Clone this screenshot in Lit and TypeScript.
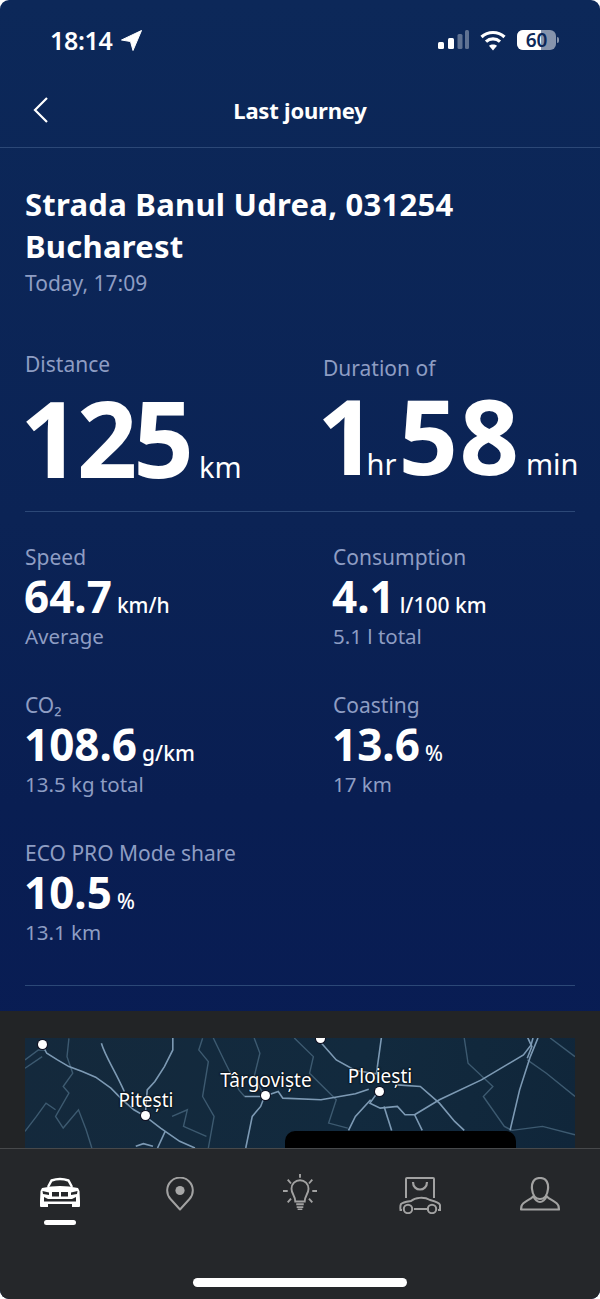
import { LitElement, html, css, svg } from "lit";
import { customElement } from "lit/decorators.js";

const W: [number, number][] = [];
for (let r = 0; r < 9; r++) for (let c = 0; c < 4; c++) W.push([176 + c * 166 - 60, 20 + r * 158.7 + 47]);

interface Stat { label: string; value: string; unit: string; sub: string; }
const stats: Stat[] = [
  { label: "Speed", value: "64.7", unit: "km/h", sub: "Average" },
  { label: "Consumption", value: "4.1", unit: "l/100 km", sub: "5.1 l total" },
  { label: "CO₂", value: "108.6", unit: "g/km", sub: "13.5 kg total" },
  { label: "Coasting", value: "13.6", unit: "%", sub: "17 km" },
  { label: "ECO PRO Mode share", value: "10.5", unit: "%", sub: "13.1 km" },
];

const bright = [
  "M110 135 L122 160 L150 180 L180 200 L215 215 L250 232 L290 265 L320 300 L350 330 L380 350 L420 385 L470 425 L510 445",
  "M265 130 C275 170 300 210 325 275",
  "M452 114 L452 150 L430 200 L405 245 L385 270 L380 345",
  "M432 395 L412 445",
  "M640 290 L690 290 L728 275 L740 295 L840 300 L930 282 L965 268",
  "M692 290 L682 320 L660 350 L643 445",
  "M990 275 L968 310 L995 325 L1040 320 L1060 345 L1085 345 L1105 392",
  "M1085 345 L1150 300 L1260 240 L1370 165 L1390 135 L1395 114",
  "M838 125 L880 180 L930 212 L985 222 L998 114",
  "M1335 392 L1360 270 L1388 170 L1408 114",
  "M1040 255 L1100 260 L1150 310 L1190 365 L1215 392",
  "M970 300 L930 350 L912 392",
  "M1005 320 L1025 392",
  "M1380 110 L1392 140 L1380 175",
  "M355 440 L375 432 L400 440",
];
const dim = [
  "M65 180 L100 150 L120 150",
  "M65 205 L110 170",
  "M180 115 L175 170 L190 220 L165 260 L180 280 L145 350 L165 385 L205 330 L225 390 L240 445",
  "M65 395 L95 350 L120 310 L145 330",
  "M530 115 L520 150 L545 185 L530 290 L560 350 L545 445",
  "M558 114 L590 190 L625 270 L640 290",
  "M665 114 L680 160 L665 230 L690 285",
  "M770 114 L820 170 L810 220 L880 300 L860 370 L910 385",
  "M1215 114 L1225 190 L1290 260 L1265 290 L1320 380 L1340 392 L1420 380 L1505 405",
  "M1380 180 L1430 220 L1505 290",
  "M1440 114 L1505 170",
  "M450 350 L490 330 L480 380 L540 410",
];

@customElement("app-root")
export class AppRoot extends LitElement {
  static styles = css`
    :host { display: block; width: 600px; height: 1299px; background: #fff; font-family: "Noto Sans", "Open Sans", sans-serif; }
    .screen { position: relative; width: 600px; height: 1299px; overflow: hidden; border-radius: 9px; display: flex; flex-direction: column;
      background: linear-gradient(180deg, #0c2859 0%, #0b2355 40%, #091e52 62%, #081b56 100%); color: #fff; }
    .status { height: 79px; flex: none; display: flex; justify-content: space-between; align-items: flex-start; padding: 26px 41px 0 50px; box-sizing: border-box; }
    .time { display: flex; align-items: center; gap: 8px; font-size: 25px; line-height: 28px; font-weight: 600; letter-spacing: -0.3px; }
    .sys { display: flex; align-items: center; gap: 11px; height: 28px; }
    .bat { position: relative; width: 39px; height: 20px; border-radius: 6px; overflow: hidden; background: rgba(255,255,255,.5); color: #0c2859; font-size: 19px; line-height: 20px; font-weight: 600; text-align: center; }
    .bat i { position: absolute; left: 0; top: 0; bottom: 0; width: 24px; background: #fff; }
    .bat span { position: relative; }
    .batwrap { display: flex; align-items: center; gap: 1px; }
    .nub { width: 2px; height: 6px; border-radius: 0 2px 2px 0; background: rgba(255,255,255,.5); }
    .nav { height: 69px; flex: none; box-sizing: border-box; border-bottom: 1px solid #2c4877; position: relative; display: flex; align-items: center; justify-content: center; padding-bottom: 6px; font-size: 22px; font-weight: 700; letter-spacing: -0.2px; }
    .back { position: absolute; left: 32px; top: 16px; }
    .head { padding: 35px 25px 0; flex: none; }
    h1 { margin: 0; font-size: 31px; line-height: 42px; font-weight: 700; letter-spacing: 0.25px; }
    .date { font-size: 21px; line-height: 32px; color: #8e9dc3; }
    .big { display: flex; flex: none; padding: 49px 25px 0; height: 163px; }
    .bigcol { width: 298px; flex: none; }
    .bigcol + .bigcol { width: 252px; }
    .lab { font-size: 21px; line-height: 32px; color: #8e9dc3; }
    .dur { padding-top: 4px; }
    .bignum { display: flex; align-items: baseline; font-size: 106px; line-height: 114px; font-weight: 700; margin-left: -5px; letter-spacing: -4px; }
    .dur .bignum { font-size: 104px; line-height: 101px; letter-spacing: 1.5px; margin-left: -6px; }
    .bigunit { font-size: 29px; line-height: 1; font-weight: 400; letter-spacing: 0; margin: 0 4px 0 9px; }
    .dur .bigunit { margin: 0 2px 0 -11.5px; }
    .dur .bigunit.min { margin: 0 0 0 5.5px; }
    .div { height: 1px; margin: 0 25px; background: #2c4877; flex: none; }
    .grid { display: grid; flex: none; grid-template-columns: 308px 1fr; grid-auto-rows: 148px; padding: 29px 25px 0; box-sizing: border-box; height: 473px; }
    .val { display: flex; align-items: baseline; gap: 5px; font-size: 44px; line-height: 46px; font-weight: 700; margin-left: -1px; }
    .unit { font-size: 21px; line-height: 1; font-weight: 500; }
    .sub { font-size: 20.5px; line-height: 30px; margin-top: 2px; color: #8e9dc3; }
    .mapzone { margin-top: 25px; height: 137px; flex: none; background: #222426; padding: 27px 25px 0; box-sizing: border-box; }
    .map { position: relative; height: 110px; overflow: hidden; background: linear-gradient(100deg, #14293c, #122a3e 60%, #10263a); }
    .map svg { display: block; width: 100%; height: 100%; }
    .city { position: absolute; color: #fff; font-size: 19px; line-height: 24px; transform: translateX(-50%); white-space: nowrap; text-shadow: 0 0 2px #000, 0 0 2px #000; }
    .dot { position: absolute; width: 9px; height: 9px; margin: -4.5px; border-radius: 50%; background: #fff; box-shadow: 0 0 0 1px #112; }
    .pill { position: absolute; left: 260px; top: 93px; width: 231px; height: 40px; border-radius: 10px; background: #000; }
    .tabs { height: 151px; background: #25272a; border-top: 1px solid #47494b; box-sizing: border-box; flex: none; position: relative; }
    .row { display: grid; grid-template-columns: repeat(5, 120px); height: 71px; padding-top: 28px; }
    .tab { display: flex; flex-direction: column; align-items: center; }
    .ind { width: 32px; height: 5px; border-radius: 3px; background: #fff; margin-top: 12px; }
    .bulb { margin-top: -3px; }
    .home { position: absolute; left: 193px; top: 129px; width: 214px; height: 9px; border-radius: 5px; background: #fff; }
    .wm { position: absolute; inset: 0; pointer-events: none; }
    .wm span { position: absolute; font-size: 30px; line-height: 36px; font-weight: 700; color: rgba(255,255,255,.018); transform: translate(-50%, -50%) rotate(-38deg); white-space: nowrap; }
  `;

  render() {
    return html`<div class="screen">
      <div class="status">
        <div class="time">18:14
          <svg width="21" height="21" viewBox="0 0 21 21"><path d="M20.5 .5 L0.5 10 L9.5 11.5 L12 20.5 Z" fill="#fff" stroke="#fff" stroke-linejoin="round"/></svg>
        </div>
        <div class="sys">
          <svg width="31" height="20" viewBox="0 0 31 20">
            <rect x="0" y="12" width="6" height="7" rx="1.5" fill="#fff"/>
            <rect x="10" y="8" width="6" height="11" rx="1.5" fill="#fff"/>
            <rect x="19.5" y="4" width="5" height="15" rx="1.5" fill="#fff" fill-opacity=".35"/>
            <rect x="27" y="0" width="4" height="19" rx="1.5" fill="#fff" fill-opacity=".35"/>
          </svg>
          <svg width="26" height="21" viewBox="0 0 26 21" fill="none" stroke="#fff" stroke-width="3.2">
            <path d="M1.5 7 C8 1 18 1 24.5 7"/><path d="M6 11.6 C10 8 16 8 20 11.6"/>
            <path d="M13 20.5 L9 15.8 C11 14 15 14 17 15.8 Z" fill="#fff" stroke="none"/>
          </svg>
          <div class="batwrap"><div class="bat"><i></i><span>60</span></div><div class="nub"></div></div>
        </div>
      </div>
      <div class="nav">
        <svg class="back" width="20" height="30" viewBox="0 0 20 30" fill="none" stroke="#fff" stroke-width="2.2"><path d="M15 3 L3 15 L15 27"/></svg>
        Last journey
      </div>
      <div class="head">
        <h1>Strada Banul Udrea, 031254<br />Bucharest</h1>
        <div class="date">Today, 17:09</div>
      </div>
      <div class="big">
        <div class="bigcol">
          <div class="lab">Distance</div>
          <div class="bignum">125<span class="bigunit">km</span></div>
        </div>
        <div class="bigcol dur">
          <div class="lab">Duration of</div>
          <div class="bignum">1<span class="bigunit">hr</span>58<span class="bigunit min">min</span></div>
        </div>
      </div>
      <div class="div"></div>
      <div class="grid">
        ${stats.map(s => html`<div>
          <div class="lab">${s.label}</div>
          <div class="val">${s.value}<span class="unit">${s.unit}</span></div>
          <div class="sub">${s.sub}</div>
        </div>`)}
      </div>
      <div class="div"></div>
      <div class="mapzone">
        <div class="map">
          <svg viewBox="65 114 1440 331" preserveAspectRatio="none">
            ${dim.map(d => svg`<path d=${d} fill="none" stroke="#3d5a70" stroke-width="1.4" vector-effect="non-scaling-stroke"/>`)}
            ${bright.map(d => svg`<path d=${d} fill="none" stroke="#7d9ab4" stroke-width="1.6" vector-effect="non-scaling-stroke"/>`)}
          </svg>
          <span class="dot" style="left:17px;top:6px"></span>
          <span class="dot" style="left:295px;top:0"></span>
          <span class="dot" style="left:120px;top:77px"></span>
          <span class="dot" style="left:240px;top:57px"></span>
          <span class="dot" style="left:354px;top:53px"></span>
          <span class="city" style="left:121px;top:50px">Pitești</span>
          <span class="city" style="left:241px;top:30px">Târgoviște</span>
          <span class="city" style="left:355px;top:26px">Ploiești</span>
          <div class="pill"></div>
        </div>
      </div>
      <div class="tabs">
        <div class="row">
          <div class="tab">
            <svg width="42" height="31" viewBox="0 0 42 31">
              <path d="M9 10 L12.5 3.5 Q21 0.5 29.5 3.5 L33 10" fill="none" stroke="#fff" stroke-width="2.4"/>
              <path d="M3 11 Q21 7 39 11 L40.5 14 L41 24 L41 29 Q41 30 40 30 L33 30 L33 27 L9 27 L9 30 L2 30 Q1 30 1 29 L1 24 L1.5 14 Z" fill="#fff"/>
              <path d="M5 24.5 L37 24.5 L37 20 L33 22 L9 22 L5 20 Z" fill="#25272a"/>
              <path d="M3.5 14 L10 15.5 L10 18 L4 17 Z M13 15 L20 15 L20 19.5 L13 19.5 Z M22 15 L29 15 L29 19.5 L22 19.5 Z M38.5 14 L32 15.5 L32 18 L38 17 Z" fill="#25272a"/>
            </svg>
            <div class="ind"></div>
          </div>
          <div class="tab">
            <svg width="28" height="34" viewBox="0 0 28 34">
              <path d="M14 32.5 L4.5 22 A12.8 12.8 0 1 1 23.5 22 Z" fill="none" stroke="#a2a2a2" stroke-width="2" stroke-linejoin="round"/>
              <circle cx="14" cy="13.5" r="4.6" fill="#a8a8a8"/>
            </svg>
          </div>
          <div class="tab">
            <svg class="bulb" width="34" height="36" viewBox="0 0 36 38" fill="none" stroke="#a2a2a2" stroke-width="2">
              <path d="M18 0 V4 M0 18 H5 M31 18 H36 M5 6 L8.5 10 M31 6 L27.5 10 M5 30 L8.5 26 M31 30 L27.5 26"/>
              <path d="M13 29 C13 23 9 21 9 15.5 A9 9 0 0 1 27 15.5 C27 21 23 23 23 29 Z"/>
              <path d="M14 32 H22 M14.5 35 H21.5 M15.5 37.5 H20.5"/>
            </svg>
          </div>
          <div class="tab">
            <svg width="42" height="37" viewBox="0 0 42 37" fill="none" stroke="#a2a2a2" stroke-width="2">
              <path d="M7 21 V2 Q7 1 8 1 H34 Q35 1 35 2 V21"/>
              <path d="M14 5 C14 15 28 15 28 5" stroke-width="2.2"/>
              <path d="M3 33 H1.5 Q1 29 2 27 C4 25 9 24.5 12 24 C16 20.5 25 19.5 31 23 C35 24 40 25 41 28 L41 33 H39"/>
              <path d="M15 32 H30"/>
              <circle cx="9" cy="32" r="4.2"/><circle cx="33" cy="32" r="4.2"/>
            </svg>
          </div>
          <div class="tab">
            <svg width="40" height="34" viewBox="0 0 40 34" fill="none" stroke="#a2a2a2" stroke-width="2.2" stroke-linejoin="round">
              <path d="M20 1 C13 1 11.5 7 12 12 C12.5 17 15 22 20 22 C25 22 27.5 17 28 12 C28.5 7 27 1 20 1 Z"/>
              <path d="M13.5 19 C11 23 3 24 1.5 29 L1 32.5 H39 L38.5 29 C37 24 29 23 26.5 19 C25.5 23 22 25 20 25 C18 25 14.5 23 13.5 19 Z"/>
            </svg>
          </div>
        </div>
        <div class="home"></div>
      </div>
      <div class="wm">${W.map(([x, y]) => html`<span style="left:${x}px;top:${y}px">publi24.ro</span>`)}</div>
    </div>`;
  }
}
